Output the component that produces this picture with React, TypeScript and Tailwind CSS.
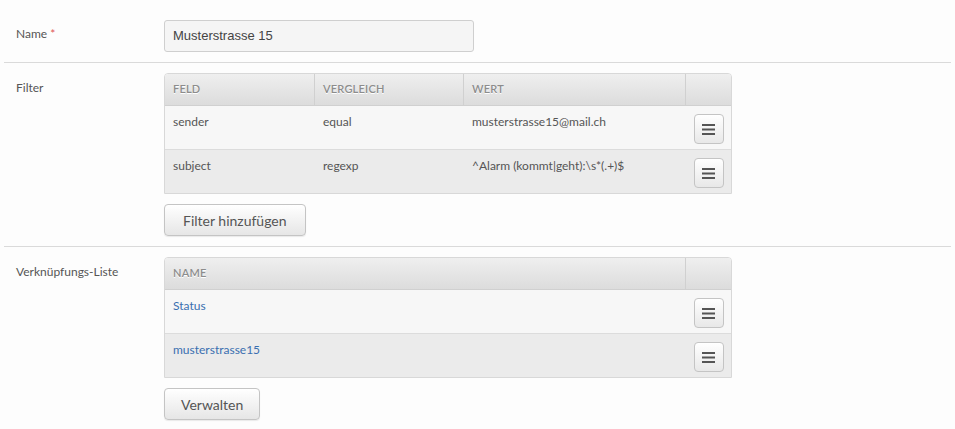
import React from 'react';

const font = { fontFamily: 'Lato, "Open Sans", sans-serif' };

function MenuButton() {
  return (
    <button className="w-[30px] h-[30px] rounded-[4px] border border-[#c4c4c4] bg-gradient-to-b from-white to-[#e8e8e8] shadow-[inset_0_1px_0_#fff] flex items-center justify-center">
      <svg width="13" height="11" viewBox="0 0 13 11">
        <rect x="0" y="0" width="13" height="2" fill="#555" />
        <rect x="0" y="4.5" width="13" height="2" fill="#555" />
        <rect x="0" y="9" width="13" height="2" fill="#555" />
      </svg>
    </button>
  );
}

function ActionButton({ label, className }: { label: string; className: string }) {
  return (
    <button className={`h-[32px] rounded-[4px] border border-[#c4c4c4] bg-gradient-to-b from-white to-[#e6e6e6] text-[14px] text-[#555] shadow-[0_1px_1px_rgba(0,0,0,0.08)] ${className}`}>
      {label}
    </button>
  );
}

function HeaderCell({ label, className }: { label?: string; className: string }) {
  return (
    <div className={`h-[31px] px-2 flex items-center text-[11px] font-semibold text-[#8c8c8c] tracking-[0.2px] [text-shadow:0_1px_0_#fff] border-r border-[#d0d0d0] last:border-r-0 ${className}`}>
      {label}
    </div>
  );
}

const filters = [
  { feld: 'sender', vergleich: 'equal', wert: 'musterstrasse15@mail.ch' },
  { feld: 'subject', vergleich: 'regexp', wert: '^Alarm (kommt|geht):\\s*(.+)$' },
];

const links = ['Status', 'musterstrasse15'];

export default function App() {
  return (
    <div className="min-h-screen w-[955px] h-[429px] bg-[#fdfdfd] text-[12px] text-[#555] overflow-hidden" style={font}>
      {/* Name */}
      <div className="flex pt-[20px] pb-[10px] mx-[4px] border-b border-[#dadada]">
        <div className="w-[160px] pl-[12px] pt-[5px]">
          Name <span className="text-[#e05555]">*</span>
        </div>
        <div
          className="w-[310px] h-[32px] border border-[#cfcfcf] rounded-[3px] bg-[#f5f5f5] px-2 flex items-center text-[13px] text-[#444]"
          style={{ fontFamily: '"Liberation Sans", Arial, sans-serif' }}
        >
          Musterstrasse 15
        </div>
      </div>

      {/* Filter */}
      <div className="flex pt-[10px] pb-[10px] mx-[4px] border-b border-[#dadada]">
        <div className="w-[160px] pl-[12px] pt-[6px]">Filter</div>
        <div className="flex flex-col gap-[10px]">
          <div className="w-[568px] border border-[#d8d8d8] rounded-t-[4px] overflow-hidden">
            <div className="flex bg-gradient-to-b from-[#efefef] to-[#dcdcdc] border-b border-[#d0d0d0]">
              <HeaderCell label="FELD" className="w-[150px]" />
              <HeaderCell label="VERGLEICH" className="w-[149px]" />
              <HeaderCell label="WERT" className="w-[222px]" />
              <HeaderCell className="flex-1" />
            </div>
            {filters.map((f, i) => (
              <div
                key={f.feld}
                className={`flex ${i === 0 ? 'h-[44px] bg-[#f7f7f7] border-b border-[#dcdcdc]' : 'h-[43px] bg-[#ebebeb]'}`}
              >
                <div className="w-[150px] px-2 pt-[7px]">{f.feld}</div>
                <div className="w-[149px] px-2 pt-[7px]">{f.vergleich}</div>
                <div className="w-[222px] px-2 pt-[7px]">{f.wert}</div>
                <div className="flex-1 flex justify-center pt-[8px]">
                  <MenuButton />
                </div>
              </div>
            ))}
          </div>
          <div>
            <ActionButton label="Filter hinzufügen" className="px-[18px]" />
          </div>
        </div>
      </div>

      {/* Verknüpfungs-Liste */}
      <div className="flex pt-[10px] mx-[4px]">
        <div className="w-[160px] pl-[12px] pt-[6px]">Verknüpfungs-Liste</div>
        <div className="flex flex-col gap-[10px]">
          <div className="w-[568px] border border-[#d8d8d8] rounded-t-[4px] overflow-hidden">
            <div className="flex bg-gradient-to-b from-[#efefef] to-[#dcdcdc] border-b border-[#d0d0d0]">
              <HeaderCell label="NAME" className="w-[521px]" />
              <HeaderCell className="flex-1" />
            </div>
            {links.map((l, i) => (
              <div
                key={l}
                className={`flex ${i === 0 ? 'h-[44px] bg-[#f7f7f7] border-b border-[#dcdcdc]' : 'h-[43px] bg-[#ebebeb]'}`}
              >
                <div className="w-[521px] px-2 pt-[7px] text-[#3a6fb0]">{l}</div>
                <div className="flex-1 flex justify-center pt-[8px]">
                  <MenuButton />
                </div>
              </div>
            ))}
          </div>
          <div>
            <ActionButton label="Verwalten" className="px-[16px]" />
          </div>
        </div>
      </div>
    </div>
  );
}
